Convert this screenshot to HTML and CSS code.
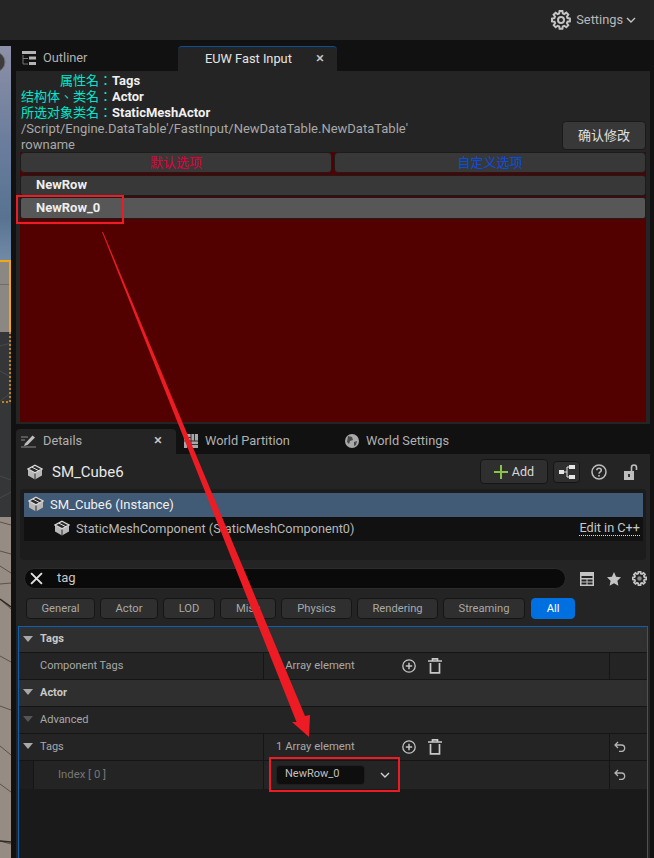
FILE: index.html
```html
<!DOCTYPE html>
<html lang="en">
<head>
<meta charset="utf-8">
<title>EUW Fast Input</title>
<link rel="stylesheet" href="styles.css">
</head>
<body>
<div class="app">
  <header class="topbar">
    <svg class="ic-gear" viewBox="0 0 20 20"><path d="M8.600 1h2.800l.4 2.400 1.500.6 2-1.400 2 2-1.400 2 .6 1.500 2.400.4v2.800l-2.400.4-.6 1.500 1.400 2-2 2-2-1.400-1.500.6-.4 2.400H8.600l-.4-2.400-1.500-.6-2 1.400-2-2 1.400-2-.6-1.500L1 11.400V8.600l2.400-.4.6-1.500-1.400-2 2-2 2 1.400 1.500-.6z" fill="none" stroke="#c4c4c4" stroke-width="2"/><circle cx="10" cy="10" r="3" fill="none" stroke="#c4c4c4" stroke-width="2"/></svg>
    <span class="settings">Settings</span>
    <svg class="ic-chev" viewBox="0 0 10 6"><path d="M1 1l4 4 4-4" fill="none" stroke="#c4c4c4" stroke-width="1.400"/></svg>
  </header>
  <div class="main">
    <svg class="viewport" viewBox="0 0 11 812" preserveAspectRatio="none">
      <defs><linearGradient id="sky" x1="0" y1="0" x2="0" y2="1"><stop offset="0" stop-color="#8d90a8"/><stop offset=".45" stop-color="#6b7d9c"/><stop offset=".8" stop-color="#587392"/><stop offset="1" stop-color="#718aa6"/></linearGradient></defs>
      <rect width="11" height="214" fill="url(#sky)"/>
      <circle cx="-5" cy="16" r="10" fill="#3c3c3c" stroke="#707078"/>
      <rect y="214" width="11" height="72" fill="#8b8883"/>
      <rect y="238" width="11" height="1" fill="#6f6c69"/>
      <rect y="286" width="11" height="186" fill="#353637"/>
      <path d="M0 300l11-3M0 325l9 5M0 355l11-8M0 430l11 4M0 452l11-6" stroke="#48494a"/>
      <rect y="214" width="11" height="2" fill="#f5a70f"/>
      <rect x="9" y="214" width="2" height="72" fill="#f5a70f"/>
      <path d="M10 286v70H0" fill="none" stroke="#c18415" stroke-width="2" stroke-dasharray="2 2"/>
      <rect y="471" width="11" height="341" fill="#978c83"/>
      <path d="M0 476l11 3M0 505l11 3M0 520l11 7M0 538l11-1M0 553l11 10M0 610l11 6M0 660l11 4M0 700l11 9M0 738l11 8M0 795l11 3" stroke="#5b5249" stroke-width="1"/>
      <path d="M0 553l11 8M0 795l11 1" stroke="#2f2a26" stroke-width="1.500"/>
    </svg>
    <div class="dock">
      <nav class="tabs tabs-top">
        <div class="tab tab-outliner">
          <svg class="ic" viewBox="0 0 14 14"><path d="M0 0h14v3H0zM7 5.500h7v3H7zM7 11h7v3H7z" fill="#b4b4b4"/><path d="M1 4v9h5M1 7.500h5" fill="none" stroke="#777"/></svg>
          <span>Outliner</span>
        </div>
        <div class="tab tab-euw"><span class="tab-name">EUW Fast Input</span><span class="close">×</span></div>
      </nav>
      <section class="panel euw">
        <div class="info-row">
          <div class="info">
            <div class="kv"><span class="k">属性名：</span><b>Tags</b></div>
            <div class="kv"><span class="k">结构体、类名：</span><b>Actor</b></div>
            <div class="kv"><span class="k">所选对象类名：</span><b>StaticMeshActor</b></div>
            <div class="plain">/Script/Engine.DataTable'/FastInput/NewDataTable.NewDataTable'</div>
            <div class="plain">rowname</div>
          </div>
          <button class="confirm">确认修改</button>
        </div>
        <div class="redzone">
          <div class="switch">
            <div class="sw sw-red">默认选项</div>
            <div class="sw sw-blue">自定义选项</div>
          </div>
          <div class="item">NewRow</div>
          <div class="item item-on">NewRow_0</div>
        </div>
      </section>
      <nav class="tabs tabs-bottom">
        <div class="tab tab-details">
          <svg class="ic" viewBox="0 0 16 14"><path d="M4 9.500L11.500 1.500l2.500 2L6.500 11l-3.500 1z" fill="#bdbdbd"/><path d="M0 3h7M0 6h4M0 13h15" stroke="#8a8a8a"/></svg>
          <span class="tab-name2">Details</span><span class="close">×</span>
        </div>
        <div class="tab tab-wp">
          <svg class="ic" viewBox="0 0 14 14"><path d="M0 0h14v14H0z" fill="#a8a8a8"/><path d="M7 0v14M0 7h14M3.500 7v7M10.500 0v7M0 3.500h7M7 10.500h7" stroke="#333"/></svg>
          <span>World Partition</span>
        </div>
        <div class="tab tab-ws">
          <svg class="ic" viewBox="0 0 14 14"><circle cx="7" cy="7" r="7" fill="#a9a9a9"/><path d="M3 2l4 1 1 3-3 1-1 3-2-2zM9 8l3-1-1 4-2 1z" fill="#4a4a4a"/></svg>
          <span>World Settings</span>
        </div>
      </nav>
      <section class="panel details">
        <div class="d-head">
          <svg class="cube" viewBox="0 0 16 16"><use href="#cube"/></svg>
          <span class="d-title">SM_Cube6</span>
          <span class="spacer"></span>
          <button class="add"><svg viewBox="0 0 14 14"><path d="M7 0v14M0 7h14" stroke="#8bc24a" stroke-width="2"/></svg>Add</button>
          <button class="hier"><svg viewBox="0 0 16 14"><path d="M0 5h5v4H0zM10 0h6v4h-6zM10 10h6v4h-6z" fill="#e4e4e4"/><path d="M5 7h3M8 2h2M8 12h2M8 2v10" stroke="#e4e4e4"/></svg></button>
          <svg class="help" viewBox="0 0 16 16"><circle cx="8" cy="8" r="7" fill="none" stroke="#bdbdbd" stroke-width="1.500"/><path d="M5.800 6.200C5.800 3.600 10.300 3.600 10.300 6.200 10.300 7.900 8 7.800 8 9.800" fill="none" stroke="#bdbdbd" stroke-width="1.500"/><rect x="7.200" y="11" width="1.600" height="1.600" fill="#bdbdbd"/></svg>
          <svg class="lock" viewBox="0 0 14 16"><path d="M0 7h10v9H0z" fill="#bdbdbd"/><path d="M7.500 7V3.500a2.500 2.500 0 0 1 5 0V6" fill="none" stroke="#bdbdbd" stroke-width="1.600"/><rect x="4" y="10" width="2" height="3" fill="#333"/></svg>
        </div>
        <div class="tree">
          <div class="t-row t-sel">
            <svg class="cube" viewBox="0 0 16 16"><use href="#cube"/></svg>
            <span>SM_Cube6 (Instance)</span>
          </div>
          <div class="t-row t-sub">
            <svg class="cube" viewBox="0 0 16 16"><use href="#cube"/></svg>
            <span>StaticMeshComponent (StaticMeshComponent0)</span>
            <span class="spacer"></span>
            <span class="edit">Edit in C++</span>
          </div>
        </div>
        <div class="search-row">
          <div class="search">
            <svg class="x" viewBox="0 0 12 12"><path d="M1 1l10 10M11 1L1 11" stroke="#e0e0e0" stroke-width="1.800"/></svg>
            <span>tag</span>
          </div>
          <svg class="tool t1" viewBox="0 0 14 14"><path d="M0 0h14v14H0z" fill="#c4c4c4"/><path d="M1.500 4h11v2h-11zM1.500 7.500h5v2h-5zM7.500 7.500h5v2h-5zM1.500 10.500h5v2h-5zM7.500 10.500h5v2h-5z" fill="#242424"/></svg>
          <svg class="tool t2" viewBox="0 0 14 14"><path d="M7 0l2.100 4.700 4.900.6-3.600 3.400 1 5L7 11.200l-4.400 2.500 1-5L0 5.300l4.900-.6z" fill="#c4c4c4"/></svg>
          <svg class="tool t3" viewBox="0 0 20 20"><path d="M8.600 1h2.800l.4 2.400 1.500.6 2-1.400 2 2-1.400 2 .6 1.500 2.400.4v2.800l-2.400.4-.6 1.500 1.400 2-2 2-2-1.400-1.500.6-.4 2.400H8.600l-.4-2.400-1.500-.6-2 1.400-2-2 1.400-2-.6-1.500L1 11.400V8.600l2.400-.4.6-1.500-1.400-2 2-2 2 1.400 1.500-.6z" fill="none" stroke="#c4c4c4" stroke-width="2.400"/><circle cx="10" cy="10" r="3" fill="#888"/></svg>
        </div>
        <div class="filters">
          <span class="f f1">General</span>
          <span class="f f2">Actor</span>
          <span class="f f3">LOD</span>
          <span class="f f4">Misc</span>
          <span class="f f5">Physics</span>
          <span class="f f6">Rendering</span>
          <span class="f f7">Streaming</span>
          <span class="f f8">All</span>
        </div>
        <div class="props">
          <div class="cat cat-first"><i class="tri"></i>Tags</div>
          <div class="row">
            <div class="c1 name">Component Tags</div>
            <div class="c2"><span class="arr">1 Array element</span>
              <svg class="a-ic" viewBox="0 0 14 14"><use href="#plus"/></svg>
              <svg class="a-ic trash" viewBox="0 0 14 16"><use href="#trash"/></svg>
            </div>
            <div class="c3"></div>
          </div>
          <div class="cat"><i class="tri"></i>Actor</div>
          <div class="adv"><i class="tri dim"></i>Advanced</div>
          <div class="row">
            <div class="c1 name"><i class="tri"></i>Tags</div>
            <div class="c2"><span class="arr">1 Array element</span>
              <svg class="a-ic" viewBox="0 0 14 14"><use href="#plus"/></svg>
              <svg class="a-ic trash" viewBox="0 0 14 16"><use href="#trash"/></svg>
            </div>
            <div class="c3"><svg class="undo" viewBox="0 0 12 11"><use href="#undo"/></svg></div>
          </div>
          <div class="row row-idx">
            <div class="c1 idx"><span class="gutter"></span><span class="idx-label">Index [ 0 ]</span></div>
            <div class="c2 c2-idx"><span class="combo">NewRow_0</span>
              <svg class="combo-chev" viewBox="0 0 10 6"><path d="M1 1l4 4 4-4" fill="none" stroke="#d0d0d0" stroke-width="1.400"/></svg>
            </div>
            <div class="c3"><svg class="undo" viewBox="0 0 12 11"><use href="#undo"/></svg></div>
          </div>
        </div>
      </section>
    </div>
  </div>
</div>

<svg class="defs" width="0" height="0">
  <defs>
    <g id="cube"><path d="M1 5.500L8 9l7-3.500V11.500L8 15.500 1 11.500z" fill="#b8b8b8"/><path d="M8 1.200L15 5 8 8.800 1 5z" fill="#2a2a2a" stroke="#dcdcdc" stroke-width="1.300"/><path d="M5 3.200l7 3.600" stroke="#dcdcdc"/><path d="M8 9.500v6" stroke="#2a2a2a"/></g>
    <g id="plus"><circle cx="7" cy="7" r="6.200" fill="none" stroke="#c4c4c4" stroke-width="1.300"/><path d="M7 3.800v6.400M3.800 7h6.400" stroke="#c4c4c4" stroke-width="1.500"/></g>
    <g id="trash"><path d="M0 3h14M4.500 3V.8h5V3M2.500 5v9.800h9V5" fill="none" stroke="#c8c8c8" stroke-width="1.700"/></g>
    <g id="undo"><path d="M4 1L1 4l3 3M1 4h6.500a3.200 3.200 0 0 1 0 6.400H5" fill="none" stroke="#b4b4b4" stroke-width="1.300"/></g>
  </defs>
</svg>

<svg class="overlay" viewBox="0 0 654 858">
  <rect x="17" y="196" width="106" height="27" fill="none" stroke="#ed1c24" stroke-width="2"/>
  <rect x="270" y="758" width="129" height="33" fill="none" stroke="#ed1c24" stroke-width="2"/>
  <path d="M102 232L103 232 305 716 310 715 309 737 292 722 296.500 722z" fill="#ed1c24"/>
</svg>
</body>
</html>
```
FILE: styles.css
```css
* { box-sizing: border-box; }
html, body { margin: 0; padding: 0; }
body {
  width: 654px;
  height: 858px;
  overflow: hidden;
  position: relative;
  background: #111;
  font-family: Roboto, "Noto Sans CJK SC", sans-serif;
  font-size: 12px;
  color: #c0c0c0;
}
.app { display: flex; flex-direction: column; height: 858px; }
.topbar {
  height: 40px;
  flex: none;
  background: #252525;
  display: flex;
  align-items: center;
  justify-content: flex-end;
  padding: 0 18px 1px 0;
}
.ic-gear { width: 20px; height: 20px; margin-right: 5px; }
.settings { font-size: 12.800px; color: #b8b8b8; margin-right: 3px; padding-bottom: 1px; }
.ic-chev { width: 10px; height: 6px; }
.main { flex: 1; display: flex; min-height: 0; padding-top: 6px; }
.viewport { width: 11px; height: 812px; flex: none; display: block; }
.dock {
  flex: none;
  width: 634px;
  margin-left: 5px;
  display: flex;
  flex-direction: column;
}
.tabs { height: 25px; flex: none; display: flex; }
.tab {
  height: 25px;
  display: flex;
  align-items: center;
  font-size: 12.800px;
  color: #b0b0b0;
  padding-bottom: 2px;
}
.ic { width: 14px; height: 14px; flex: none; }
.tab-outliner { width: 162px; padding-left: 6px; gap: 7px; }
.tab-euw {
  width: 159px;
  background: #242424;
  border-top: 1px solid #0d4f90;
  border-radius: 4px 4px 0 0;
  color: #e4e4e4;
  padding-left: 27px;
}
.tab-name { width: 111px; }
.close { font-size: 15px; line-height: 1; color: #c8c8c8; font-weight: 500; }
.panel { background: #242424; }
.euw {
  height: 353px;
  flex: none;
  padding: 2px 4px 2px 4px;
  display: flex;
  flex-direction: column;
}
.info-row { display: flex; height: 79px; flex: none; }
.info { flex: 1; line-height: 16px; }
.kv { display: flex; font-size: 13px; height: 16px; }
.k { width: 92px; text-align: right; color: #00e6cc; flex: none; font-family: Roboto, "Noto Sans CJK TC", sans-serif; }
.kv b { color: #f0f0f0; font-weight: 700; font-size: 13px; }
.plain { font-size: 13px; color: #a8a8a8; height: 15.500px; padding-left: 1px; }
.confirm {
  width: 84px;
  height: 29px;
  margin-top: 48px;
  background: #383838;
  border: 1px solid #1a1a1a;
  border-radius: 4px;
  color: #e0e0e0;
  font: 13px "Noto Sans CJK SC", sans-serif;
  padding: 0 0 2px;
}
.redzone {
  flex: 1;
  background: #520000;
  display: flex;
  flex-direction: column;
  gap: 1px;
}
.switch { display: flex; gap: 2px; height: 21px; flex: none; margin-bottom: 1px; }
.sw {
  flex: 1;
  background: #383838;
  border: 1px solid #1c1c1c;
  border-radius: 4px;
  display: flex;
  align-items: center;
  justify-content: center;
  font-size: 13px;
  padding-bottom: 2px;
}
.sw-red { color: #e0003c; }
.sw-blue { color: #0a4ee0; }
.item {
  height: 21px;
  flex: none;
  background: #383838;
  border: 1px solid #1c1c1c;
  border-radius: 3px;
  padding: 0 0 2px 15px;
  display: flex;
  align-items: center;
  font-weight: 700;
  font-size: 13px;
  color: #eee;
}
.item-on { background: #575757; height: 22px; }
.tabs-bottom { margin-top: 5px; }
.tab-details {
  width: 160px;
  background: #242424;
  border-radius: 4px 4px 0 0;
  padding-left: 5px;
}
.tab-details .ic { width: 16px; }
.tab-name2 { margin-left: 6px; width: 111px; }
.tab-wp { width: 169px; padding-left: 8px; gap: 7px; }
.tab-ws { padding-left: 0; gap: 7px; }
.details { flex: 1; display: flex; flex-direction: column; min-height: 0; }
.d-head { height: 35px; flex: none; display: flex; align-items: center; padding: 0 12px 0 11px; }
.cube { width: 16px; height: 16px; flex: none; }
.d-title { font-size: 15px; color: #e8e8e8; margin-left: 9px; }
.spacer { flex: 1; }
.add {
  width: 68px;
  height: 25px;
  background: #2f2f2f;
  border: 1px solid #151515;
  border-radius: 4px;
  color: #d8d8d8;
  font: 12.500px Roboto, sans-serif;
  display: flex;
  align-items: center;
  justify-content: center;
  gap: 4px;
  padding: 0;
}
.add svg { width: 14px; height: 14px; }
.hier {
  width: 27px;
  height: 22px;
  margin-left: 5px;
  background: #2f2f2f;
  border: 1px solid #151515;
  border-radius: 4px;
  display: flex;
  align-items: center;
  justify-content: center;
  padding: 0;
}
.hier svg { width: 16px; height: 14px; }
.help { width: 16px; height: 16px; margin-left: 11px; }
.lock { width: 14px; height: 16px; margin-left: 17px; }
.tree {
  height: 71px;
  flex: none;
  margin: 0 4px;
  padding: 4px 3px 0 4px;
  background: #1c1c1c;
  border-radius: 4px;
}
.t-row { height: 24px; display: flex; align-items: center; padding-bottom: 2px; }
.t-sel { background: #415a75; color: #f0f0f0; padding-left: 4px; gap: 6px; font-size: 13px; }
.t-sub { background: #111; padding: 0 3px 2px 30px; gap: 6px; font-size: 12.700px; color: #b8b8b8; }
.edit { border-bottom: 1px dotted #ddd; line-height: 14px; color: #c8c8c8; }
.search-row { height: 21px; flex: none; margin-top: 8px; display: flex; align-items: center; padding-left: 8px; }
.search {
  width: 542px;
  height: 21px;
  background: #0a0a0a;
  border: 1px solid #2c2c2c;
  border-radius: 11px;
  display: flex;
  align-items: center;
  padding: 0 0 2px 5px;
  font-size: 13px;
  color: #c8c8c8;
}
.x { width: 13px; height: 13px; margin-right: 14px; margin-top: 2px; }
.tool { flex: none; }
.t1 { width: 14px; height: 14px; margin-left: 14px; }
.t2 { width: 14px; height: 14px; margin-left: 13px; }
.t3 { width: 15px; height: 15px; margin-left: 11px; }
.filters { height: 21px; flex: none; margin: 9px 0 0 10px; display: flex; gap: 5px; }
.f {
  background: #2f2f2f;
  border: 1px solid #151515;
  border-radius: 4px;
  display: flex;
  align-items: center;
  justify-content: center;
  font-size: 11.200px;
  color: #a8a8a8;
}
.f1 { width: 69px; }
.f2 { width: 58px; }
.f3 { width: 52px; }
.f4 { width: 56px; }
.f5 { width: 71px; }
.f6 { width: 81px; }
.f7 { width: 82px; margin-right: 1px; }
.f8 { width: 44px; background: #0070e0; color: #fff; border-color: #0070e0; }
.props {
  flex: 1;
  margin: 7px 2px 0 2px;
  background: #1a1a1a;
  border: 1px solid #0e5fb0;
  border-bottom: 0;
  min-height: 0;
}
.tri {
  display: inline-block;
  width: 0;
  height: 0;
  border-left: 5px solid transparent;
  border-right: 5px solid transparent;
  border-top: 6px solid #a8a8a8;
  margin-right: 7px;
  flex: none;
}
.tri.dim { border-top-color: #555; }
.cat, .adv {
  height: 27px;
  display: flex;
  align-items: center;
  padding: 0 0 2px 4px;
  border-bottom: 1px solid #151515;
  font-size: 11px;
}
.cat-first { height: 26px; }
.cat { background: #2f2f2f; color: #c8c8c8; font-weight: 700; }
.adv { background: #242424; color: #a8a8a8; font-size: 11px; }
.row { height: 27px; display: flex; background: #242424; border-bottom: 1px solid #151515; font-size: 11px; }
.row-idx { height: 28px; border-bottom: 0; }
.c1 { width: 245px; flex: none; display: flex; align-items: center; border-right: 1px solid #151515; }
.name { padding: 0 0 2px 4px; color: #a8a8a8; }
.name:not(:has(.tri)) { padding-left: 21px; }
.c2 { width: 346px; flex: none; display: flex; align-items: center; padding: 0 0 1px 12px; border-right: 1px solid #151515; color: #a8a8a8; }
.c2-idx { padding-bottom: 0; }
.arr { width: 126px; font-size: 11.300px; padding-bottom: 1px; }
.a-ic { width: 14px; height: 14px; margin-right: 12px; flex: none; }
.trash { height: 16px; }
.c3 { flex: 1; display: flex; align-items: center; padding: 0 0 2px 4px; }
.undo { width: 12px; height: 11px; }
.idx { padding: 0; color: #777; font-size: 11.300px; }
.gutter { width: 15px; height: 100%; background: #1e1e1e; border-right: 1px solid #151515; flex: none; }
.idx-label { margin-left: 24px; padding-bottom: 2px; }
.combo {
  width: 89px;
  height: 20px;
  background: #0e0e0e;
  border: 1px solid #1e1e1e;
  border-radius: 4px;
  display: flex;
  align-items: center;
  padding: 0 0 3px 8px;
  color: #c0c0c0;
}
.combo-chev { width: 10px; height: 6px; margin-left: 15px; }
.defs { position: absolute; }
.overlay { position: absolute; left: 0; top: 0; width: 654px; height: 858px; pointer-events: none; }
```
